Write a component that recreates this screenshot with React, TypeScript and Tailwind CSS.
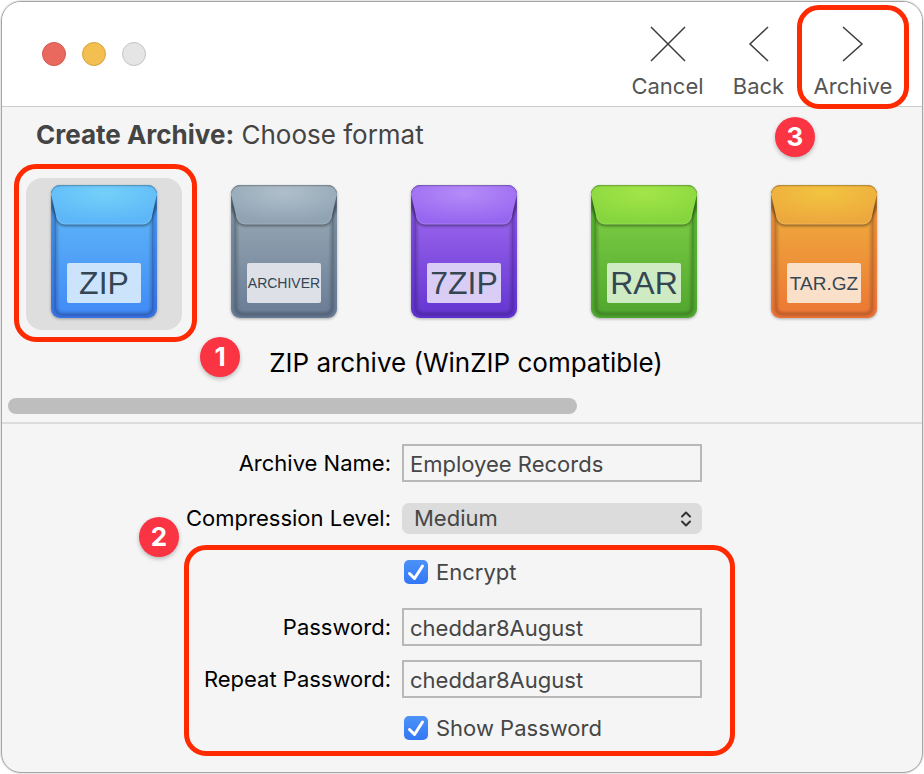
import { useState } from "react";
import type { ReactNode } from "react";

type Format = {
  id: string;
  caption: string;
  labelSize: number;
  labelY: number;
  flap: [string, string];
  body: [string, string];
  rim: [string, string];
  plate: string;
};

const FORMATS: Format[] = [
  { id: "ZIP", caption: "ZIP archive (WinZIP compatible)", labelSize: 32, labelY: 110, flap: ["#74d0f9", "#5cb6f8"], body: ["#5cb2f7", "#418bf7"], rim: ["#4a9cf0", "#3873e8"], plate: "#cbe4fc" },
  { id: "ARCHIVER", caption: "Archiver archive", labelSize: 14, labelY: 104, flap: ["#b0bfca", "#8fa3b3"], body: ["#94a5b2", "#6a7d96"], rim: ["#8297a8", "#677a95"], plate: "#dde1e7" },
  { id: "7ZIP", caption: "7-Zip archive", labelSize: 32, labelY: 110, flap: ["#b58bf8", "#9766f0"], body: ["#9863ec", "#6537d2"], rim: ["#8c57e8", "#6032d4"], plate: "#d9cdf5" },
  { id: "RAR", caption: "RAR archive", labelSize: 32, labelY: 110, flap: ["#a3e548", "#85d53e"], body: ["#7acb42", "#51a72f"], rim: ["#5cb933", "#50a92f"], plate: "#ceebc3" },
  { id: "TAR.GZ", caption: "TAR.GZ archive", labelSize: 19, labelY: 106, flap: ["#f2c440", "#eda83d"], body: ["#efa83d", "#ec7834"], rim: ["#ef9a3b", "#ee7336"], plate: "#fae0c9" },
];

function Envelope({ format }: { format: Format }) {
  const key = format.id.replace(".", "");
  return (
    <svg width="118" height="146" viewBox="-6 -6 118 146" role="img" aria-label={format.id}>
      <defs>
        <radialGradient id={`flap-${key}`} cx="0.5" cy="0.2" r="0.75">
          <stop offset="0" stopColor={format.flap[0]} />
          <stop offset="1" stopColor={format.flap[1]} />
        </radialGradient>
        <linearGradient id={`body-${key}`} x1="0" y1="0" x2="0" y2="1">
          <stop offset="0.3" stopColor={format.body[0]} />
          <stop offset="1" stopColor={format.body[1]} />
        </linearGradient>
        <linearGradient id={`rim-${key}`} x1="0" y1="0" x2="0" y2="1">
          <stop offset="0" stopColor={format.rim[0]} />
          <stop offset="1" stopColor={format.rim[1]} />
        </linearGradient>
        <filter id={`soft-${key}`} x="-20%" y="-20%" width="140%" height="140%">
          <feGaussianBlur stdDeviation="1.5" />
        </filter>
        <clipPath id={`clip-${key}`}>
          <rect x="0" y="1" width="106" height="133" rx="9" />
        </clipPath>
      </defs>
      <rect x="0" y="2" width="106" height="133" rx="9" fill="#000" opacity="0.3" filter={`url(#soft-${key})`} />
      <rect x="0" y="1" width="106" height="133" rx="9" fill={`url(#rim-${key})`} />
      <g clipPath={`url(#clip-${key})`}>
        <rect x="5" y="-10" width="96" height="140" rx="6" fill={`url(#body-${key})`} />
        <rect x="5" y="-10" width="96" height="140" rx="6" fill="none" stroke="#000" strokeOpacity="0.3" strokeWidth="2.5" filter={`url(#soft-${key})`} />
        <path d="M0 10L0 24L5 34C6.500 40 10 42 15 42H91C96 42 99.500 40 101 34L106 24V10Z" fill="#000" opacity="0.45" filter={`url(#soft-${key})`} />
        <path d="M0 10C0 4 4 1 10 1H96C102 1 106 4 106 10L101 32C99.500 38.500 96 40.500 91 40.500H15C10 40.500 6.500 38.500 5 32Z" fill={`url(#flap-${key})`} />
        <path d="M0 9C1 3 5 1.500 10 1.500H96C101 1.500 105 3 106 9" fill="none" stroke="#000" strokeOpacity="0.22" strokeWidth="1.500" />
        <path d="M5.500 32C7 38 10 40 15 40H91C96 40 99 38 100.500 32" fill="none" stroke="#fff" strokeOpacity="0.15" />
      </g>
      <rect x="16" y="79" width="74" height="40" rx="2" fill={format.plate} />
      <text x="53" y={format.labelY} textAnchor="middle" fontSize={format.labelSize} fontFamily='"Liberation Sans", sans-serif' fill="#344653">
        {format.id}
      </text>
    </svg>
  );
}

function ToolButton({ label, path, className }: { label: string; path: string; className: string }) {
  return (
    <button type="button" className={`flex flex-col items-center ${className}`}>
      <svg width="36" height="36" viewBox="0 0 36 36" fill="none" stroke="#3c3c3c" strokeWidth="1.500">
        <path d={path} />
      </svg>
      <span className="mt-2.5 text-[22px] leading-7 text-[#555]">{label}</span>
    </button>
  );
}

function Callout({ className }: { className: string }) {
  return <div className={`pointer-events-none absolute rounded-[22px] border-5 border-[#ff2a00] ${className}`} />;
}

function Badge({ n, className }: { n: number; className: string }) {
  return (
    <div className={`absolute flex size-10 items-center justify-center rounded-full bg-[#fa3443] text-[26px] leading-none font-bold text-white shadow-[0_2px_4px_rgba(0,0,0,0.25)] ${className}`}>
      {n}
    </div>
  );
}

function FieldRow({ id, label, children }: { id: string; label: string; children: ReactNode }) {
  return (
    <div className="grid grid-cols-[20fr_15fr_11fr] items-center">
      <label htmlFor={id} className="pr-[11px] text-right text-[22px] leading-7 whitespace-nowrap text-black">
        {label}
      </label>
      {children}
    </div>
  );
}

function TextField({ id, value, onChange }: { id: string; value: string; onChange: (v: string) => void }) {
  return (
    <input
      id={id}
      type="text"
      value={value}
      onChange={(e) => onChange(e.target.value)}
      className="h-[38px] w-full border-2 border-[#b8b8b8] bg-transparent px-1.5 pt-0.5 text-[22px] text-[#464646] outline-none"
    />
  );
}

function CheckRow({ label, checked, onChange }: { label: string; checked: boolean; onChange: (v: boolean) => void }) {
  return (
    <div className="grid grid-cols-[20fr_26fr]">
      <label className="col-start-2 ml-0.5 flex h-6 items-center gap-2 text-[22px] leading-6 text-[#464646]">
        <span className="relative size-6">
          <input
            type="checkbox"
            checked={checked}
            onChange={(e) => onChange(e.target.checked)}
            className="block size-6 appearance-none rounded-[5px] border border-[#b8b8b8] checked:border-0 checked:bg-linear-to-b checked:from-[#4c92f8] checked:to-[#3377f5]"
          />
          {checked && (
            <svg className="pointer-events-none absolute inset-0" width="24" height="24" viewBox="0 0 24 24" fill="none" stroke="#fff" strokeWidth="3" strokeLinecap="round" strokeLinejoin="round">
              <path d="M5.500 13.500L10.500 18.500L18.500 6" />
            </svg>
          )}
        </span>
        {label}
      </label>
    </div>
  );
}

export default function App() {
  const [selected, setSelected] = useState("ZIP");
  const [name, setName] = useState("Employee Records");
  const [level, setLevel] = useState("Medium");
  const [encrypt, setEncrypt] = useState(true);
  const [password, setPassword] = useState("cheddar8August");
  const [repeat, setRepeat] = useState("cheddar8August");
  const [show, setShow] = useState(true);
  const current = FORMATS.find((f) => f.id === selected);

  return (
    <div className="bg-white p-px font-['Inter','Liberation_Sans',sans-serif]">
      <main className="rounded-[20px] border border-[#a5a5a5] bg-[#f5f5f5] shadow-[0_0_0_1px_#e6e6e6]">
        <header className="flex items-start justify-between rounded-t-[19px] border-b border-[#cbcbcb] bg-white pr-[29px] pl-10">
          <div className="mt-10 flex gap-4">
            <button type="button" aria-label="Close" className="size-6 rounded-full border border-[#d5574c] bg-[#e9695e]" />
            <button type="button" aria-label="Minimize" className="size-6 rounded-full border border-[#d6a243] bg-[#f2bf50]" />
            <button type="button" aria-label="Zoom" className="size-6 rounded-full border border-[#c4c4c4] bg-[#e5e5e5]" />
          </div>
          <nav className="flex gap-7 pt-6 pb-1.5">
            <ToolButton label="Cancel" path="M1 1L35 35M35 1L1 35" className="w-[73px]" />
            <ToolButton label="Back" path="M27 1L9 18L27 35" className="w-[53px]" />
            <div className="relative">
              <ToolButton label="Archive" path="M8 1L27 18L8 35" className="w-20" />
              <Callout className="-inset-x-4 -top-[21px] -bottom-[9px]" />
              <Badge n={3} className="top-[91px] right-[78px]" />
            </div>
          </nav>
        </header>

        <section className="border-b-2 border-[#dcdcdc] pt-3 pb-2">
          <h1 className="pl-[34px] text-[26px] leading-8 font-normal text-[#444]">
            <b className="font-bold">Create Archive:</b> Choose format
          </h1>
          <div className="relative mt-[27px] pl-6">
            <div className="flex gap-6 overflow-hidden">
              {FORMATS.map((f) => (
                <button
                  key={f.id}
                  type="button"
                  onClick={() => setSelected(f.id)}
                  className={`flex h-[152px] w-[156px] shrink-0 justify-center rounded-2xl ${f.id === selected ? "bg-[#dedede]" : ""}`}
                >
                  <Envelope format={f} />
                </button>
              ))}
            </div>
            <Callout className="-top-3.5 -bottom-3 left-3 w-[183px]" />
            <Badge n={1} className="top-[159px] left-[198px]" />
          </div>
          <p className="mt-[17px] pl-2 text-center text-[26px] leading-8 text-black">{current?.caption}</p>
          <div className="mt-[19px] px-1.5">
            <div className="h-4 w-[569px] rounded-full bg-[#bebebe]" />
          </div>
        </section>

        <form className="pt-5 pb-8" onSubmit={(e) => e.preventDefault()}>
          <FieldRow id="archive-name" label="Archive Name:">
            <TextField id="archive-name" value={name} onChange={setName} />
          </FieldRow>
          <div className="mt-[19px]">
            <FieldRow id="level" label="Compression Level:">
              <div className="relative pt-0.5">
                <select
                  id="level"
                  value={level}
                  onChange={(e) => setLevel(e.target.value)}
                  className="block h-[31px] w-full appearance-none rounded-[7px] bg-[#dcdcdc] px-3 pb-0.5 text-[22px] leading-7 text-[#464646] outline-none"
                >
                  <option>Low</option>
                  <option>Medium</option>
                  <option>High</option>
                </select>
                <svg className="pointer-events-none absolute top-2.5 right-2.5" width="12" height="16" viewBox="0 0 12 16" fill="none" stroke="#333" strokeWidth="2" strokeLinecap="round" strokeLinejoin="round">
                  <path d="M2 5.500L6 1.500L10 5.500M2 10.500L6 14.500L10 10.500" />
                </svg>
              </div>
            </FieldRow>
          </div>

          <div className="relative mt-[26px]">
            <CheckRow label="Encrypt" checked={encrypt} onChange={setEncrypt} />
            <div className="mt-6 mb-[18px] flex flex-col gap-3.5">
              <FieldRow id="password" label="Password:">
                <TextField id="password" value={password} onChange={setPassword} />
              </FieldRow>
              <FieldRow id="repeat" label="Repeat Password:">
                <TextField id="repeat" value={repeat} onChange={setRepeat} />
              </FieldRow>
            </div>
            <CheckRow label="Show Password" checked={show} onChange={setShow} />
            <Callout className="-top-[15px] right-[187px] -bottom-4 left-[182px]" />
            <Badge n={2} className="-top-[43px] left-[137px]" />
          </div>
        </form>
      </main>
    </div>
  );
}
